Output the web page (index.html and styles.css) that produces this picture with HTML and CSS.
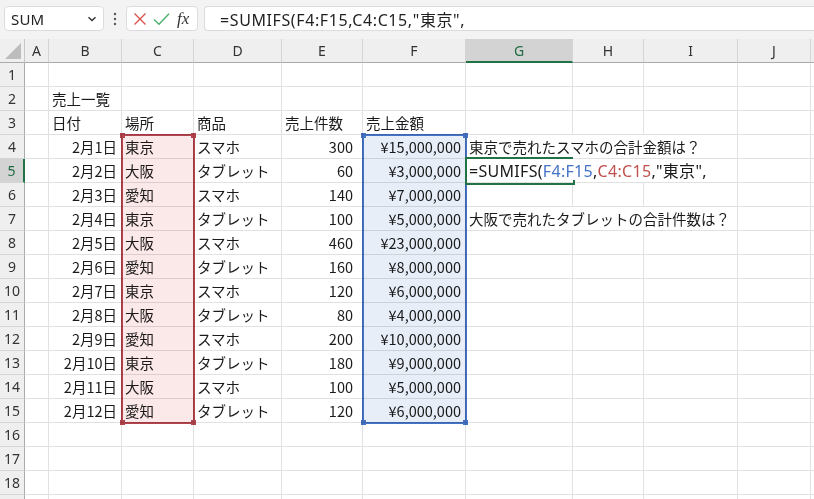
FILE: index.html
```html
<!DOCTYPE html>
<html lang="ja">
<head>
<meta charset="utf-8">
<link rel="stylesheet" href="styles.css">
</head>
<body>
<div class="app">
  <div class="fbar">
    <div class="namebox">
      <span class="nb-text">SUM</span>
      <svg class="chev" width="10" height="8" viewBox="0 0 10 8"><path d="M1.5 2.2 L5 5.6 L8.5 2.2" fill="none" stroke="#333" stroke-width="1.4"/></svg>
    </div>
    <div class="vdots">
      <svg width="4" height="14" viewBox="0 0 4 14"><circle cx="2" cy="2" r="1.2" fill="#555"/><circle cx="2" cy="7" r="1.2" fill="#555"/><circle cx="2" cy="12" r="1.2" fill="#555"/></svg>
    </div>
    <div class="iconbox">
      <svg width="14" height="14" viewBox="0 0 14 14"><path d="M1.5 1.5 L12.5 12.5 M12.5 1.5 L1.5 12.5" stroke="#d9534f" stroke-width="1.4" fill="none"/></svg>
      <svg width="17" height="14" viewBox="0 0 17 14"><path d="M1 7.5 L6 12.2 L16 1.8" stroke="#4caf6e" stroke-width="1.4" fill="none"/></svg>
      <span class="fx">fx</span>
    </div>
    <div class="formula">=SUMIFS(F4:F15,C4:C15,"東京",</div>
  </div>

  <div class="sheet">
    <div class="corner"><svg width="18" height="18" viewBox="0 0 18 18"><path d="M17 1 L17 17 L1 17 Z" fill="#bdbdbd"/></svg></div>
    <div class="ch">A</div><div class="ch">B</div><div class="ch">C</div><div class="ch">D</div><div class="ch">E</div><div class="ch">F</div><div class="ch sel">G</div><div class="ch">H</div><div class="ch">I</div><div class="ch">J</div><div class="ch last"></div>

    <div class="rh">1</div><div class="c"></div><div class="c"></div><div class="c"></div><div class="c"></div><div class="c"></div><div class="c"></div><div class="c"></div><div class="c"></div><div class="c"></div><div class="c"></div><div class="c last"></div>

    <div class="rh">2</div><div class="c"></div><div class="c l">売上一覧</div><div class="c"></div><div class="c"></div><div class="c"></div><div class="c"></div><div class="c"></div><div class="c"></div><div class="c"></div><div class="c"></div><div class="c last"></div>

    <div class="rh">3</div><div class="c"></div><div class="c l">日付</div><div class="c l">場所</div><div class="c l">商品</div><div class="c l">売上件数</div><div class="c l">売上金額</div><div class="c"></div><div class="c"></div><div class="c"></div><div class="c"></div><div class="c last"></div>

    <div class="rh">4</div><div class="c"></div><div class="c r">2月1日</div><div class="c l">東京</div><div class="c l">スマホ</div><div class="c rn">300</div><div class="c r">¥15,000,000</div><div class="c l span3">東京で売れたスマホの合計金額は？</div><div class="c"></div><div class="c last"></div>

    <div class="rh sel">5</div><div class="c"></div><div class="c r">2月2日</div><div class="c l">大阪</div><div class="c l">タブレット</div><div class="c rn">60</div><div class="c r">¥3,000,000</div><div class="c l span3 edit">=SUMIFS(<span class="ref-b">F4:F15</span>,<span class="ref-r">C4:C15</span>,"東京",</div><div class="c"></div><div class="c last"></div>

    <div class="rh">6</div><div class="c"></div><div class="c r">2月3日</div><div class="c l">愛知</div><div class="c l">スマホ</div><div class="c rn">140</div><div class="c r">¥7,000,000</div><div class="c"></div><div class="c"></div><div class="c"></div><div class="c"></div><div class="c last"></div>

    <div class="rh">7</div><div class="c"></div><div class="c r">2月4日</div><div class="c l">東京</div><div class="c l">タブレット</div><div class="c rn">100</div><div class="c r">¥5,000,000</div><div class="c l span3">大阪で売れたタブレットの合計件数は？</div><div class="c"></div><div class="c last"></div>

    <div class="rh">8</div><div class="c"></div><div class="c r">2月5日</div><div class="c l">大阪</div><div class="c l">スマホ</div><div class="c rn">460</div><div class="c r">¥23,000,000</div><div class="c"></div><div class="c"></div><div class="c"></div><div class="c"></div><div class="c last"></div>

    <div class="rh">9</div><div class="c"></div><div class="c r">2月6日</div><div class="c l">愛知</div><div class="c l">タブレット</div><div class="c rn">160</div><div class="c r">¥8,000,000</div><div class="c"></div><div class="c"></div><div class="c"></div><div class="c"></div><div class="c last"></div>

    <div class="rh">10</div><div class="c"></div><div class="c r">2月7日</div><div class="c l">東京</div><div class="c l">スマホ</div><div class="c rn">120</div><div class="c r">¥6,000,000</div><div class="c"></div><div class="c"></div><div class="c"></div><div class="c"></div><div class="c last"></div>

    <div class="rh">11</div><div class="c"></div><div class="c r">2月8日</div><div class="c l">大阪</div><div class="c l">タブレット</div><div class="c rn">80</div><div class="c r">¥4,000,000</div><div class="c"></div><div class="c"></div><div class="c"></div><div class="c"></div><div class="c last"></div>

    <div class="rh">12</div><div class="c"></div><div class="c r">2月9日</div><div class="c l">愛知</div><div class="c l">スマホ</div><div class="c rn">200</div><div class="c r">¥10,000,000</div><div class="c"></div><div class="c"></div><div class="c"></div><div class="c"></div><div class="c last"></div>

    <div class="rh">13</div><div class="c"></div><div class="c r">2月10日</div><div class="c l">東京</div><div class="c l">タブレット</div><div class="c rn">180</div><div class="c r">¥9,000,000</div><div class="c"></div><div class="c"></div><div class="c"></div><div class="c"></div><div class="c last"></div>

    <div class="rh">14</div><div class="c"></div><div class="c r">2月11日</div><div class="c l">大阪</div><div class="c l">スマホ</div><div class="c rn">100</div><div class="c r">¥5,000,000</div><div class="c"></div><div class="c"></div><div class="c"></div><div class="c"></div><div class="c last"></div>

    <div class="rh">15</div><div class="c"></div><div class="c r">2月12日</div><div class="c l">愛知</div><div class="c l">タブレット</div><div class="c rn">120</div><div class="c r">¥6,000,000</div><div class="c"></div><div class="c"></div><div class="c"></div><div class="c"></div><div class="c last"></div>

    <div class="rh">16</div><div class="c"></div><div class="c"></div><div class="c"></div><div class="c"></div><div class="c"></div><div class="c"></div><div class="c"></div><div class="c"></div><div class="c"></div><div class="c"></div><div class="c last"></div>

    <div class="rh">17</div><div class="c"></div><div class="c"></div><div class="c"></div><div class="c"></div><div class="c"></div><div class="c"></div><div class="c"></div><div class="c"></div><div class="c"></div><div class="c"></div><div class="c last"></div>

    <div class="rh">18</div><div class="c"></div><div class="c"></div><div class="c"></div><div class="c"></div><div class="c"></div><div class="c"></div><div class="c"></div><div class="c"></div><div class="c"></div><div class="c"></div><div class="c last"></div>

    <div class="rh">19</div><div class="c"></div><div class="c"></div><div class="c"></div><div class="c"></div><div class="c"></div><div class="c"></div><div class="c"></div><div class="c"></div><div class="c"></div><div class="c"></div><div class="c last"></div>

    <div class="range red"><i class="h tl"></i><i class="h tr"></i><i class="h bl"></i><i class="h br"></i></div>
    <div class="range blue"><i class="h tl"></i><i class="h tr"></i><i class="h bl"></i><i class="h br"></i></div>
    <div class="active"><i class="fill"></i></div>
  </div>
</div>
</body>
</html>
```

FILE: styles.css
```css
html, body {
  margin: 0;
  padding: 0;
  background: #ffffff;
  overflow: hidden;
}
.app {
  width: 814px;
  height: 499px;
  overflow: hidden;
  font-family: "Noto Sans", "Noto Sans CJK JP", sans-serif;
  color: #1f1f1f;
}
.fbar {
  height: 39px;
  box-sizing: border-box;
  background: #f3f3f3;
  display: flex;
  align-items: flex-start;
  padding-top: 6px;
  padding-left: 4px;
}
.namebox {
  width: 100px;
  height: 25px;
  box-sizing: border-box;
  background: #fff;
  border: 1px solid #dcdcdc;
  border-radius: 4px;
  display: flex;
  align-items: center;
  justify-content: space-between;
  padding: 0 6px 0 6px;
  font-size: 15px;
  color: #222;
}
.nb-text { letter-spacing: 0.2px; }
.chev { margin-top: 1px; }
.vdots {
  width: 22px;
  height: 25px;
  display: flex;
  align-items: center;
  justify-content: center;
}
.iconbox {
  width: 72px;
  height: 25px;
  box-sizing: border-box;
  background: #fff;
  border: 1px solid #dcdcdc;
  border-radius: 4px;
  display: flex;
  align-items: center;
  gap: 6px;
  padding-left: 6px;
}
.fx {
  font-family: "Liberation Serif", "DejaVu Serif", serif;
  font-style: italic;
  font-size: 17px;
  color: #333;
  margin-left: 1px;
  line-height: 1;
}
.formula {
  flex: 1;
  margin-left: 6px;
  height: 25px;
  box-sizing: border-box;
  background: #fff;
  border: 1px solid #dcdcdc;
  border-right: none;
  border-radius: 4px 0 0 4px;
  padding-left: 15px;
  display: flex;
  align-items: center;
  font-family: "Noto Sans", "Noto Sans CJK JP", sans-serif;
  font-size: 16px;
  letter-spacing: 0.6px;
  color: #1f1f1f;
  white-space: nowrap;
}

.sheet {
  position: relative;
  display: grid;
  grid-template-columns: 25px 24px 73px 72px 88px 81px 103px 107px 71px 94px 73px 1fr;
  grid-template-rows: repeat(20, 24px);
  font-family: "Noto Sans CJK JP", sans-serif;
  font-size: 14.5px;
  color: #1a1a1a;
}
.corner {
  background: #efefef;
  border-right: 1px solid #c8c8c8;
  border-bottom: 1px solid #ababab;
  display: flex;
  align-items: flex-end;
  justify-content: flex-end;
  padding: 0 2px 2px 0;
}
.ch {
  background: #efefef;
  border-right: 1px solid #d4d4d4;
  border-bottom: 1px solid #ababab;
  display: flex;
  align-items: center;
  justify-content: center;
  font-family: "Noto Sans", sans-serif;
  font-size: 14px;
  color: #333;
  min-width: 0;
}
.ch.sel {
  background: #d3d3d3;
  color: #1f6b42;
  border-bottom: 2px solid #217346;
}
.ch.last { border-right: none; }
.rh {
  background: #efefef;
  border-right: 1px solid #ababab;
  border-bottom: 1px solid #d4d4d4;
  display: flex;
  align-items: center;
  justify-content: center;
  font-family: "Noto Sans", sans-serif;
  font-size: 14px;
  color: #333;
}
.rh.sel {
  background: #d3d3d3;
  color: #1f6b42;
  border-right: 2px solid #217346;
}
.c {
  border-right: 1px solid #e1e1e1;
  border-bottom: 1px solid #e1e1e1;
  display: flex;
  align-items: center;
  white-space: nowrap;
  min-width: 0;
  overflow: visible;
  line-height: 1;
  padding-top: 1px;
}
.c.last { border-right: none; }
.c.l { justify-content: flex-start; padding-left: 3px; }
.c.r { justify-content: flex-end; padding-right: 4px; }
.c.rn { justify-content: flex-end; padding-right: 9px; }
.span3 { grid-column: span 3; }
.edit {
  font-family: "Noto Sans", "Noto Sans CJK JP", sans-serif;
  font-size: 16px;
  letter-spacing: 0.3px;
}
.ref-b { color: #4472c4; }
.ref-r { color: #c0504d; }

.range {
  position: absolute;
  grid-row: 5 / 17;
  top: -1px;
  bottom: -1px;
  left: -1px;
  right: -1px;
  border: 2px solid;
  mix-blend-mode: multiply;
  z-index: 2;
}
.range.red {
  grid-column: 4 / 5;
  border-color: #b3434c;
  background: #fbe8e9;
}
.range.blue {
  grid-column: 7 / 8;
  border-color: #4472c4;
  background: #e8eef8;
}
.h {
  position: absolute;
  width: 5px;
  height: 5px;
}
.red .h { background: #b3434c; }
.blue .h { background: #4472c4; }
.h.tl { left: -3px; top: -3px; }
.h.tr { right: -3px; top: -3px; }
.h.bl { left: -3px; bottom: -3px; }
.h.br { right: -3px; bottom: -3px; }

.active {
  position: absolute;
  grid-column: 8 / 9;
  grid-row: 6 / 7;
  top: -2px;
  bottom: -2px;
  left: -1px;
  right: 0;
  border: 2px solid #217346;
  border-right: none;
  z-index: 3;
}
.fill {
  position: absolute;
  right: -2px;
  bottom: -2px;
  width: 2px;
  height: 5px;
  background: #217346;
}
```
